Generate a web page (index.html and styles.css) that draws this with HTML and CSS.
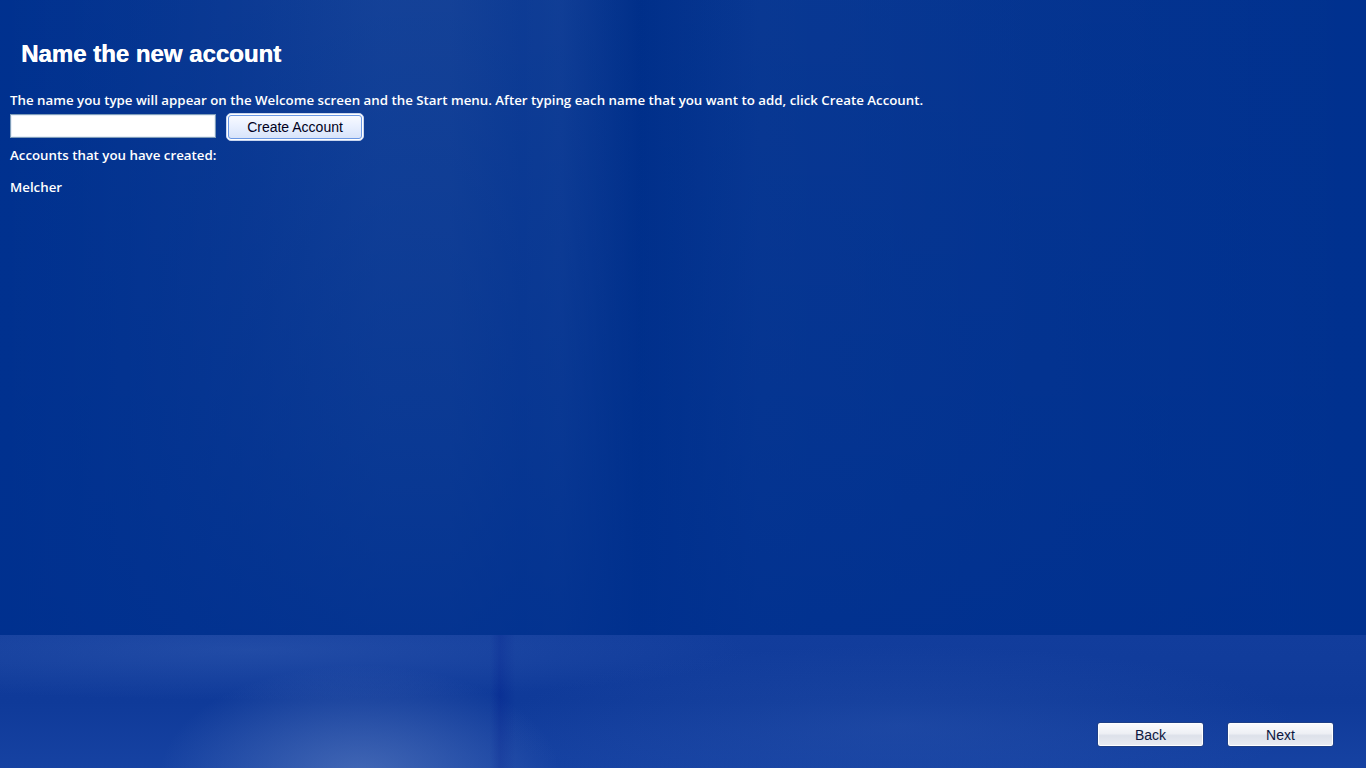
FILE: index.html
```html
<!DOCTYPE html>
<html lang="en">
<head>
<meta charset="utf-8">
<title>Name the new account</title>
<link rel="stylesheet" href="styles.css">
</head>
<body>
<div class="screen">
  <div class="bg-top"></div>
  <div class="bg-floor"></div>
  <main class="content">
    <h1 class="title">Name the new account</h1>
    <p class="intro">The name you type will appear on the Welcome screen and the Start menu. After typing each name that you want to add, click Create Account.</p>
    <div class="entry-row">
      <input class="name-input" type="text" aria-label="Account name">
      <button class="create-btn" type="button"><span>Create Account</span></button>
    </div>
    <p class="created-label">Accounts that you have created:</p>
    <ul class="account-list">
      <li>Melcher</li>
    </ul>
  </main>
  <footer class="nav">
    <button class="nav-btn" type="button">Back</button>
    <button class="nav-btn" type="button">Next</button>
  </footer>
</div>
</body>
</html>
```
FILE: styles.css
```css
* { box-sizing: border-box; }
html, body { margin: 0; padding: 0; height: 100%; }
body { background: #00318f; overflow: hidden; }

.screen {
  position: relative;
  width: 1366px;
  height: 768px;
  display: flex;
  flex-direction: column;
  background:
    linear-gradient(90deg,
      rgba(255,255,255,0) 0px,
      rgba(255,255,255,0.02) 120px,
      rgba(255,255,255,0.05) 250px,
      rgba(120,150,200,0.18) 380px,
      rgba(110,140,190,0.20) 450px,
      rgba(255,255,255,0.06) 520px,
      rgba(255,255,255,0.07) 560px,
      rgba(0,0,0,0.04) 640px,
      rgba(255,255,255,0.04) 760px,
      rgba(255,255,255,0.03) 900px,
      rgba(255,255,255,0.02) 1050px,
      rgba(255,255,255,0) 1366px),
    #00328f;
  font-family: "Liberation Sans", Arial, sans-serif;
  color: #fff;
}

.bg-top {
  position: absolute;
  left: 0; top: 0; right: 0;
  height: 635px;
  background: linear-gradient(180deg, rgba(0,40,140,0.1) 0%, rgba(0,48,143,0.55) 70%, rgba(0,48,143,0.8) 100%);
  pointer-events: none;
}

.bg-floor {
  position: absolute;
  left: 0; right: 0; bottom: 0;
  height: 133px;
  background:
    radial-gradient(ellipse 200px 110px at 360px 140px, rgba(110,140,200,0.5), rgba(110,140,200,0) 100%),
    radial-gradient(ellipse 500px 50px at 250px 15px, rgba(70,110,190,0.3), rgba(70,110,190,0) 100%),
    linear-gradient(90deg, rgba(0,0,0,0) 490px, rgba(0,30,140,0.35) 500px, rgba(0,0,0,0) 515px),
    radial-gradient(ellipse 400px 80px at 900px 90px, rgba(70,110,190,0.2), rgba(70,110,190,0) 100%),
    linear-gradient(180deg, #123d9c 0%, #0f3a99 50%, #1642a2 100%);
  pointer-events: none;
}

.content {
  position: relative;
  padding: 40px 0 0 10px;
  flex: 1;
}

.title {
  margin: 0 0 23px 11px;
  font-family: "Liberation Sans", Arial, sans-serif;
  font-weight: bold;
  font-size: 24px;
  line-height: 28px;
  text-shadow: 0.4px 0 0 #fff;
}

.intro, .created-label, .account-list {
  font-family: "Open Sans", sans-serif;
  font-weight: 600;
  font-size: 13.3px;
  line-height: 18px;
}

.intro { margin: 0 0 5px 0; }

.entry-row {
  display: flex;
  align-items: flex-start;
  gap: 10px;
}

.name-input {
  width: 206px;
  height: 24px;
  margin: 0;
  background: #fff;
  border: 1px solid #7f9db9;
  box-shadow: inset 0 0 0 1px #e8eef8;
  font: 13px "Liberation Sans", Arial, sans-serif;
  padding: 2px 4px;
}

.create-btn {
  width: 138px;
  height: 28px;
  margin: -1px 0 0 0;
  padding: 1px;
  border: 1px solid #c9d6ef;
  border-radius: 5px;
  background: #ffffff;
  cursor: default;
}
.create-btn span {
  display: flex;
  align-items: center;
  justify-content: center;
  height: 100%;
  border-radius: 3px;
  border: 1px solid #6b98e4;
  background: linear-gradient(180deg, #f8faff 0%, #e9f0ff 45%, #d8e4fa 100%);
  color: #000020;
  font: 14px "Liberation Sans", Arial, sans-serif;
}

.created-label { margin: 5px 0 14px 0; }

.account-list {
  list-style: none;
  margin: 0;
  padding: 0;
}

.nav {
  position: relative;
  display: flex;
  justify-content: flex-end;
  gap: 23px;
  padding: 0 32px 21px 0;
}

.nav-btn {
  width: 107px;
  height: 25px;
  margin: 0;
  border: 1px solid #1e3f86;
  border-radius: 3px;
  background: linear-gradient(180deg, #fbfbfd 0%, #eef0f5 45%, #dde1ea 55%, #e9ecf2 100%);
  box-shadow: inset 0 0 0 1px #ffffff;
  color: #0c1640;
  font: 14px "Liberation Sans", Arial, sans-serif;
  cursor: default;
}
```
